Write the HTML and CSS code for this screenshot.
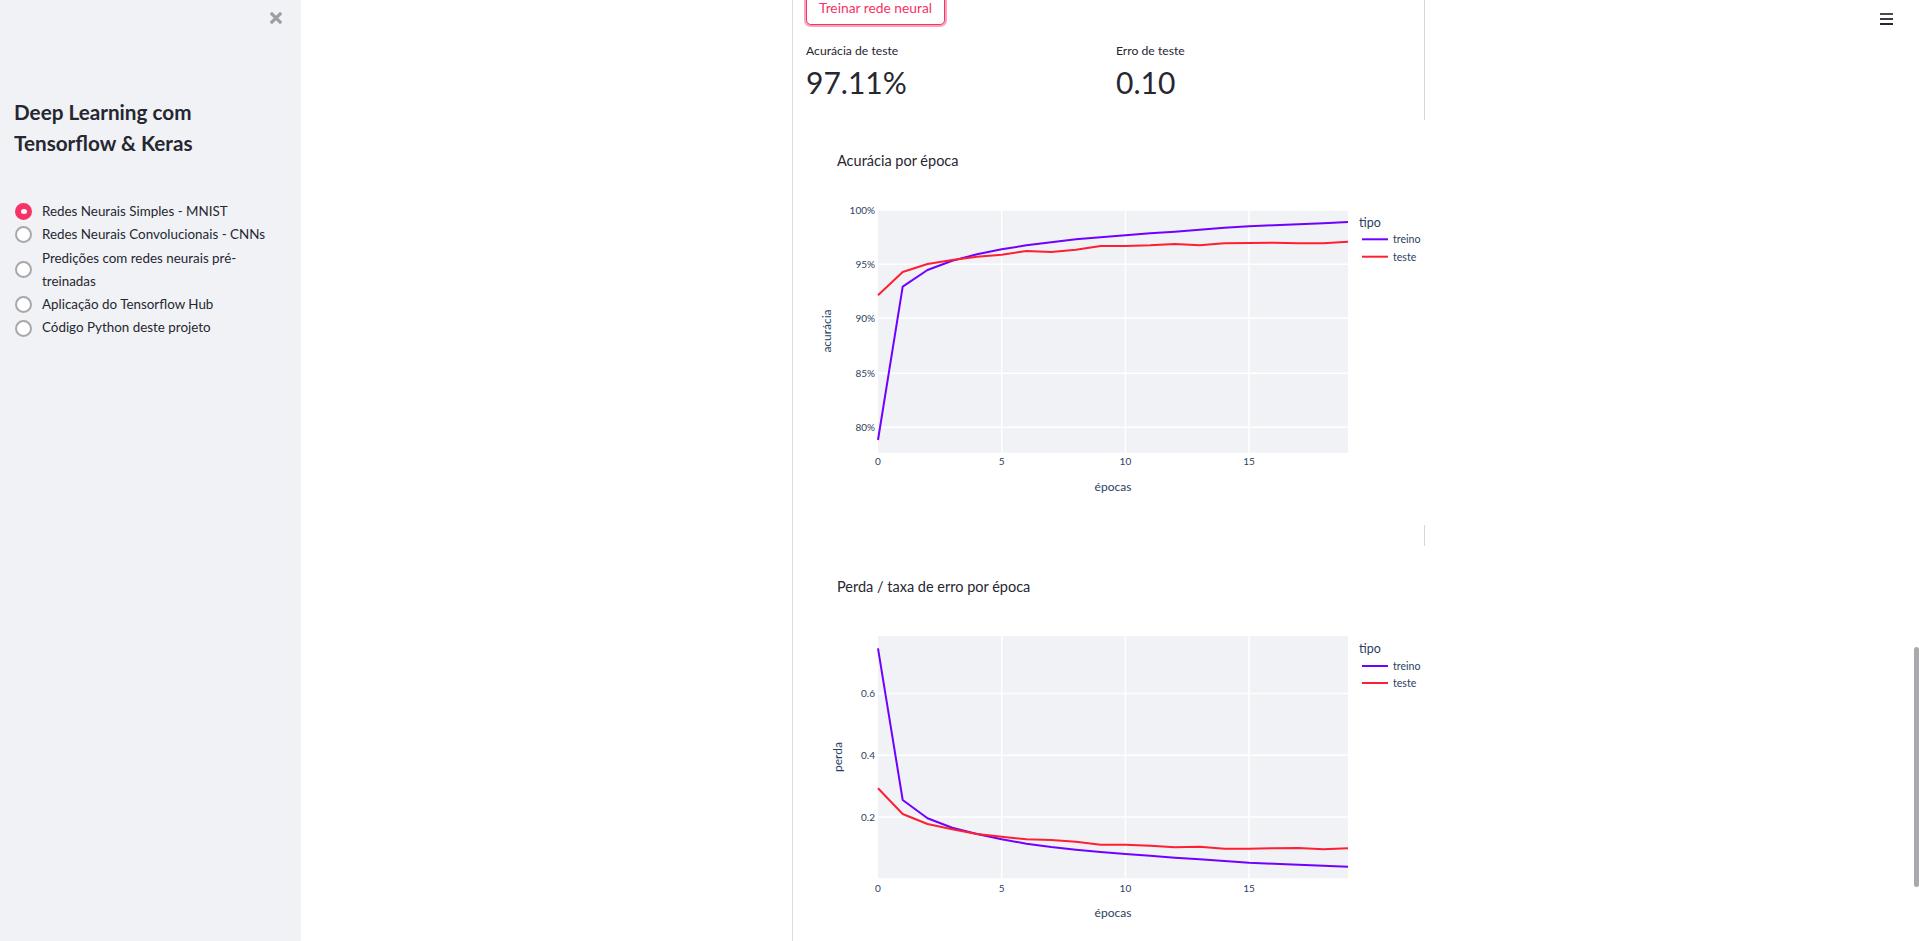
FILE: index.html
```html
<!DOCTYPE html>
<html lang="pt">
<head>
<meta charset="utf-8">
<title>Deep Learning com Tensorflow &amp; Keras</title>
<link rel="stylesheet" href="styles.css">
</head>
<body>
<div class="app">
  <aside class="sidebar">
    <div class="sb-top">
      <button class="close" aria-label="Fechar">
        <svg width="14" height="14" viewBox="0 0 14 14"><path d="M1.8 1.8 L12.2 12.2 M12.2 1.8 L1.8 12.2" stroke="#9d9da3" stroke-width="3.2" stroke-linecap="butt"/></svg>
      </button>
    </div>
    <h1 class="sb-title">Deep Learning com Tensorflow &amp; Keras</h1>
    <div class="radios">
      <label class="radio"><span class="dot on"></span><span class="rtext">Redes Neurais Simples - MNIST</span></label>
      <label class="radio"><span class="dot"></span><span class="rtext">Redes Neurais Convolucionais - CNNs</span></label>
      <label class="radio"><span class="dot"></span><span class="rtext">Predições com redes neurais pré-treinadas</span></label>
      <label class="radio"><span class="dot"></span><span class="rtext">Aplicação do Tensorflow Hub</span></label>
      <label class="radio"><span class="dot"></span><span class="rtext">Código Python deste projeto</span></label>
    </div>
  </aside>
  <main class="main">
    <div class="block">
      <div class="top-section">
        <button class="btn">Treinar rede neural</button>
        <div class="metrics">
          <div class="metric">
            <div class="m-label">Acurácia de teste</div>
            <div class="m-value">97.11%</div>
          </div>
          <div class="metric">
            <div class="m-label">Erro de teste</div>
            <div class="m-value">0.10</div>
          </div>
        </div>
      </div>
      <svg class="chart chart1" width="618" height="405" viewBox="806 120 618 405">
        <text class="c-title" x="837" y="160">Acurácia por época</text>
        <rect x="878" y="210" width="470" height="242.7" class="plotbg"/>
        <g class="grid">
          <line x1="878" x2="1348" y1="210" y2="210"/>
          <line x1="878" x2="1348" y1="264.3" y2="264.3"/>
          <line x1="878" x2="1348" y1="318.3" y2="318.3"/>
          <line x1="878" x2="1348" y1="373.3" y2="373.3"/>
          <line x1="878" x2="1348" y1="427.3" y2="427.3"/>
          <line x1="1001.7" x2="1001.7" y1="210" y2="452.7"/>
          <line x1="1125.4" x2="1125.4" y1="210" y2="452.7"/>
          <line x1="1249.1" x2="1249.1" y1="210" y2="452.7"/>
        </g>
        <g class="ytick">
          <text x="875" y="210">100%</text>
          <text x="875" y="264.3">95%</text>
          <text x="875" y="318.3">90%</text>
          <text x="875" y="373.3">85%</text>
          <text x="875" y="427.3">80%</text>
        </g>
        <g class="xtick">
          <text x="878" y="461">0</text>
          <text x="1001.7" y="461">5</text>
          <text x="1125.4" y="461">10</text>
          <text x="1249.1" y="461">15</text>
        </g>
        <text class="ax-title" x="1113" y="486">épocas</text>
        <text class="ax-title" x="826" y="331" transform="rotate(-90 826 331)">acurácia</text>
        <polyline class="l-treino" points="878,440 902.7,286.7 927.5,270 952.2,260.7 977,254.3 1001.7,249.3 1026.4,245.3 1051.2,242.3 1075.9,239.3 1100.6,237.3 1125.4,235.3 1150.1,233.3 1174.8,231.7 1199.6,229.7 1224.3,227.7 1249.1,226.3 1273.8,225.3 1298.5,224.3 1323.3,223.3 1348,222"/>
        <polyline class="l-teste" points="878,295.3 902.7,272 927.5,264 952.2,260 977,256.7 1001.7,254.7 1026.4,251 1051.2,252 1075.9,249.7 1100.6,246 1125.4,246 1150.1,245.3 1174.8,244 1199.6,245.3 1224.3,243.3 1249.1,243 1273.8,242.7 1298.5,243.3 1323.3,243.3 1348,241.7"/>
        <text class="lg-title" x="1359" y="222.3">tipo</text>
        <line class="l-treino" x1="1362" x2="1388" y1="239.3" y2="239.3"/>
        <text class="lg-item" x="1393" y="239.3">treino</text>
        <line class="l-teste" x1="1362" x2="1388" y1="256.7" y2="256.7"/>
        <text class="lg-item" x="1393" y="256.7">teste</text>
      </svg>
      <div class="spacer"></div>
      <svg class="chart chart2" width="618" height="400" viewBox="806 546 618 400">
        <text class="c-title" x="837" y="586">Perda / taxa de erro por época</text>
        <rect x="878" y="636" width="470" height="242.3" class="plotbg"/>
        <g class="grid">
          <line x1="878" x2="1348" y1="693.4" y2="693.4"/>
          <line x1="878" x2="1348" y1="755.2" y2="755.2"/>
          <line x1="878" x2="1348" y1="817" y2="817"/>
          <line x1="1001.7" x2="1001.7" y1="636" y2="878.3"/>
          <line x1="1125.4" x2="1125.4" y1="636" y2="878.3"/>
          <line x1="1249.1" x2="1249.1" y1="636" y2="878.3"/>
        </g>
        <g class="ytick">
          <text x="875" y="693.4">0.6</text>
          <text x="875" y="755.2">0.4</text>
          <text x="875" y="817">0.2</text>
        </g>
        <g class="xtick">
          <text x="878" y="887.7">0</text>
          <text x="1001.7" y="887.7">5</text>
          <text x="1125.4" y="887.7">10</text>
          <text x="1249.1" y="887.7">15</text>
        </g>
        <text class="ax-title" x="1113" y="912.3">épocas</text>
        <text class="ax-title" x="837" y="757" transform="rotate(-90 837 757)">perda</text>
        <polyline class="l-treino" points="878,648.3 902.7,800 927.5,818.3 952.2,827.7 977,834 1001.7,839.3 1026.4,843.7 1051.2,847 1075.9,849.7 1100.6,852 1125.4,854 1150.1,855.7 1174.8,857.7 1199.6,859.3 1224.3,861 1249.1,862.7 1273.8,863.7 1298.5,864.7 1323.3,865.7 1348,866.7"/>
        <polyline class="l-teste" points="878,788.3 902.7,814 927.5,824 952.2,829.3 977,834 1001.7,836.7 1026.4,839.3 1051.2,840 1075.9,841.7 1100.6,844.7 1125.4,844.7 1150.1,845.7 1174.8,847.3 1199.6,846.7 1224.3,848.7 1249.1,848.7 1273.8,848.3 1298.5,848 1323.3,849.3 1348,848.3"/>
        <text class="lg-title" x="1359" y="648.3">tipo</text>
        <line class="l-treino" x1="1362" x2="1388" y1="666" y2="666"/>
        <text class="lg-item" x="1393" y="666">treino</text>
        <line class="l-teste" x1="1362" x2="1388" y1="683" y2="683"/>
        <text class="lg-item" x="1393" y="683">teste</text>
      </svg>
    </div>
    <div class="hamburger">
      <svg width="13" height="12" viewBox="0 0 13 12"><rect x="0" y="0" width="13" height="2" fill="#4a4b57"/><rect x="0" y="5" width="13" height="2" fill="#3a3b47"/><rect x="0" y="10" width="13" height="2" fill="#262730"/></svg>
    </div>
    <div class="scroll-thumb"></div>
  </main>
</div>
</body>
</html>
```
FILE: styles.css
```css
html, body {
  margin: 0;
  padding: 0;
}
body {
  font-family: "Lato", "Noto Sans", sans-serif;
  color: #262730;
  overflow: hidden;
  background: #fff;
}
.app {
  display: flex;
  height: 941px;
}
.sidebar {
  width: 301px;
  flex: none;
  background: #f0f2f6;
  box-sizing: border-box;
  padding: 0 18px 0 14px;
}
.sb-top {
  height: 36px;
  display: flex;
  justify-content: flex-end;
  align-items: center;
}
.close {
  border: 0;
  background: transparent;
  padding: 0;
  width: 14px;
  height: 14px;
  display: block;
  cursor: pointer;
}
.close svg { display: block; }
.sb-title {
  margin: 60.5px 0 0;
  font-size: 20.7px;
  line-height: 31px;
  font-weight: 700;
  max-width: 230px;
  color: #262730;
}
.radios {
  margin-top: 41.5px;
  display: flex;
  flex-direction: column;
}
.radio {
  display: flex;
  align-items: center;
  gap: 10px;
  padding-left: 1px;
  font-size: 13.4px;
  line-height: 23.3px;
  color: #262730;
}
.rtext {
  max-width: 232px;
}
.dot {
  width: 17px;
  height: 17px;
  flex: none;
  box-sizing: border-box;
  border-radius: 50%;
  border: 2px solid #a7a7ad;
  background: #fff;
  display: flex;
  align-items: center;
  justify-content: center;
}
.dot.on {
  background: #f63366;
  border-color: #f63366;
}
.dot.on::after {
  content: "";
  width: 6px;
  height: 5px;
  border-radius: 50%;
  background: #fff;
}
.main {
  flex: 1;
  position: relative;
  overflow: hidden;
}
.block {
  width: 636px;
  height: 100%;
  margin: 0 auto;
  box-sizing: border-box;
  border-left: 1px solid #dcdcdf;
  padding-left: 13px;
}
.top-section {
  width: 619px;
  height: 120px;
  box-sizing: border-box;
  border-right: 1px solid #d6d6d9;
  display: flex;
  flex-direction: column;
  align-items: flex-start;
}
.btn {
  margin-top: -9px;
  height: 34px;
  box-sizing: border-box;
  border: 1px solid #f63366;
  border-radius: 5px;
  background: #fff;
  color: #f63366;
  font-family: inherit;
  font-size: 13.8px;
  line-height: 32px;
  padding: 0 12px;
  box-shadow: 0 0 0 2px rgba(246, 51, 102, 0.45);
}
.metrics {
  margin-top: 16px;
  display: grid;
  grid-template-columns: 294px 1fr;
  column-gap: 16px;
  width: 100%;
}
.m-label {
  font-size: 12.2px;
  line-height: 20px;
}
.m-value {
  font-size: 30px;
  line-height: 43px;
}
.chart {
  display: block;
}
.spacer {
  width: 619px;
  height: 21px;
  box-sizing: border-box;
  border-right: 1px solid #d6d6d9;
}
.plotbg { fill: #f0f2f6; }
.grid line { stroke: #fff; stroke-width: 1.5; }
.chart text { font-family: "Lato", "Noto Sans", sans-serif; dominant-baseline: central; }
.c-title { font-size: 14.5px; fill: #262730; }
.ytick text { font-size: 10px; fill: #2a3f5f; text-anchor: end; }
.xtick text { font-size: 10px; fill: #2a3f5f; text-anchor: middle; }
.ax-title { font-size: 12px; fill: #2a3f5f; text-anchor: middle; }
.lg-title { font-size: 12.5px; fill: #2a3f5f; }
.lg-item { font-size: 10.6px; fill: #2a3f5f; }
.l-treino { fill: none; stroke: #7000ff; stroke-width: 2; stroke-linejoin: round; }
.l-teste { fill: none; stroke: #ff1f33; stroke-width: 2; stroke-linejoin: round; }
.hamburger {
  position: absolute;
  top: 13px;
  right: 26px;
  line-height: 0;
}
.scroll-thumb {
  position: absolute;
  right: 0;
  top: 647px;
  width: 5px;
  height: 240px;
  border-radius: 3px;
  background: #a9a9ae;
}
```
